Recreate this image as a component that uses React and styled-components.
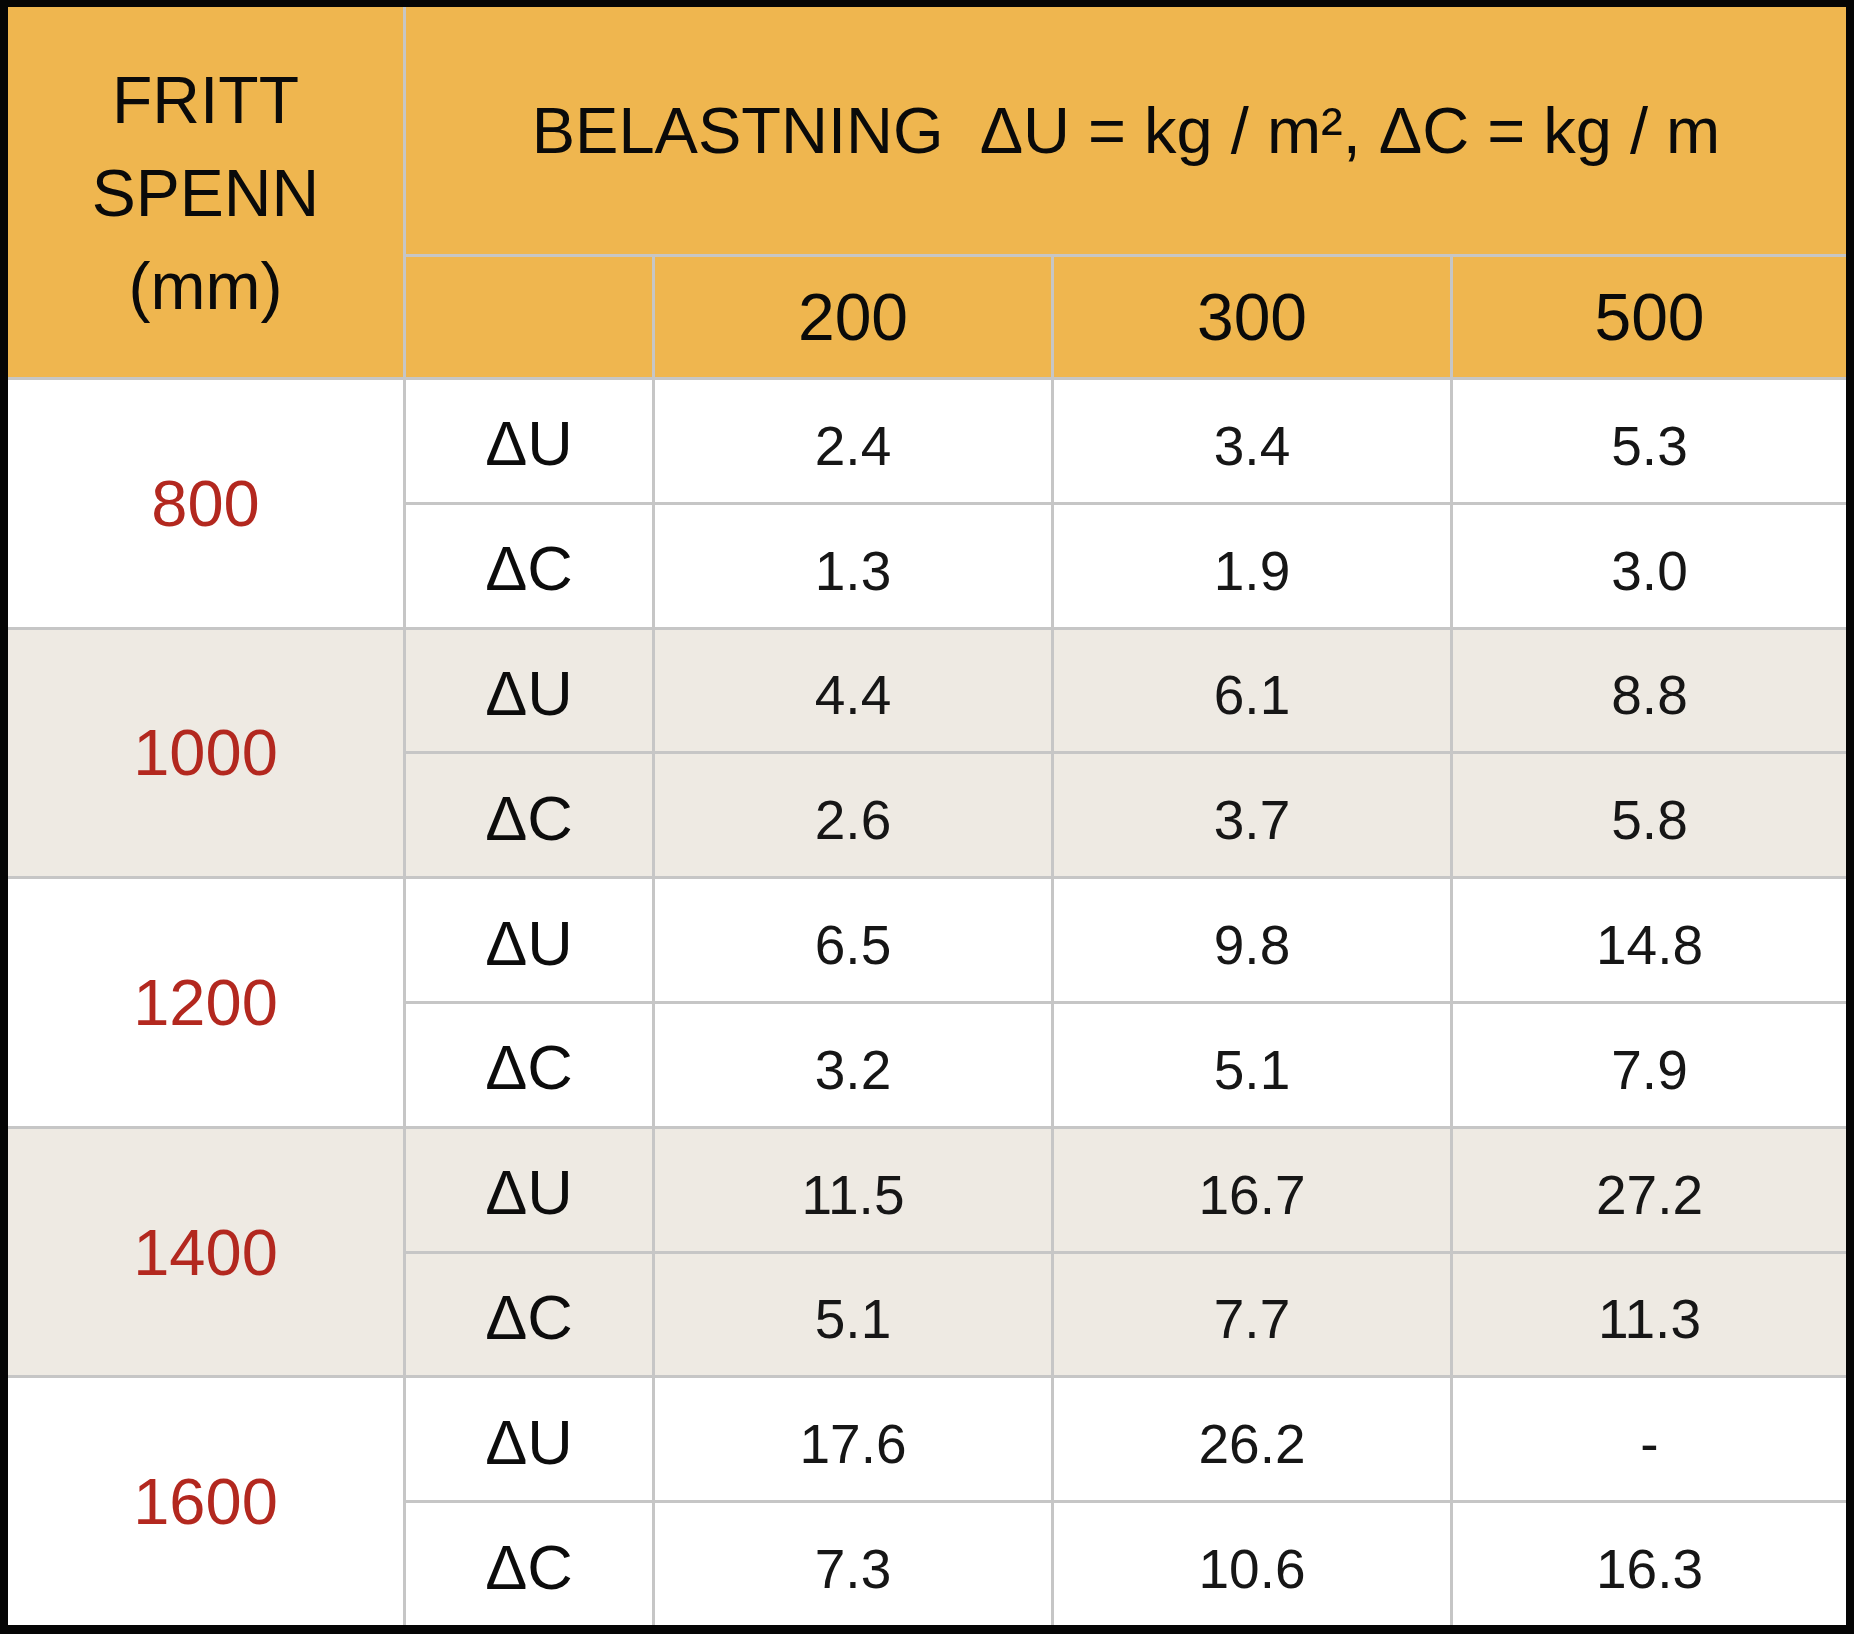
import React from "react";
import styled, { createGlobalStyle } from "styled-components";

const Global = createGlobalStyle`
  html, body { margin: 0; padding: 0; background: #ffffff; }
  body { font-family: "Liberation Sans", Arial, sans-serif; }
`;

const Frame = styled.div`
  box-sizing: border-box;
  width: 1854px;
  height: 1634px;
  border-style: solid;
  border-color: #050505;
  border-width: 7px 8px 9px 8px;
  background: #c6c6c6;
`;

const Grid = styled.div`
  display: grid;
  height: 100%;
  grid-template-columns: 395px 246px 396px 396px 393px;
  grid-template-rows: 247px 120px repeat(10, 1fr);
  gap: 3px;
  background: #c6c6c6;
  font-family: "Liberation Sans", Arial, sans-serif;
`;

const Cell = styled.div`
  display: flex;
  align-items: center;
  justify-content: center;
  text-align: center;
  box-sizing: border-box;
  background: ${(p) => (p.$shade ? "#eeeae3" : "#ffffff")};
  color: #161616;
  line-height: 1;
`;

const HeadCell = styled(Cell)`
  background: #efb64f;
  color: #0a0a0a;
  font-size: 66px;
  white-space: pre;
`;

const SpanHead = styled(HeadCell)`
  grid-row: span 2;
  flex-direction: column;
  line-height: 93px;
  padding-top: 2px;
`;

const TitleCell = styled(HeadCell)`
  grid-column: span 4;
  font-size: 65px;
`;

const GroupCell = styled(Cell)`
  grid-row: span 2;
  color: #b3281f;
  font-size: 65px;
`;

const KindCell = styled(Cell)`
  font-size: 63px;
  color: #0c0c0c;
  padding-top: 6px;
`;

const ValueCell = styled(Cell)`
  font-size: 55px;
  padding-top: 11px;
`;

const loads = [200, 300, 500];

const groups = [
  { span: "800", u: ["2.4", "3.4", "5.3"], c: ["1.3", "1.9", "3.0"] },
  { span: "1000", u: ["4.4", "6.1", "8.8"], c: ["2.6", "3.7", "5.8"] },
  { span: "1200", u: ["6.5", "9.8", "14.8"], c: ["3.2", "5.1", "7.9"] },
  { span: "1400", u: ["11.5", "16.7", "27.2"], c: ["5.1", "7.7", "11.3"] },
  { span: "1600", u: ["17.6", "26.2", "-"], c: ["7.3", "10.6", "16.3"] },
];

export default function App() {
  return (
    <>
      <Global />
      <Frame>
        <Grid>
          <SpanHead>
            <span>FRITT</span>
            <span>SPENN</span>
            <span>(mm)</span>
          </SpanHead>
          <TitleCell>{"BELASTNING  ΔU = kg / m², ΔC = kg / m"}</TitleCell>
          <HeadCell />
          {loads.map((l) => (
            <HeadCell key={l}>{l}</HeadCell>
          ))}
          {groups.map((g, i) => {
            const shade = i % 2 === 1;
            return (
              <React.Fragment key={g.span}>
                <GroupCell $shade={shade}>{g.span}</GroupCell>
                <KindCell $shade={shade}>ΔU</KindCell>
                {g.u.map((v, j) => (
                  <ValueCell key={"u" + j} $shade={shade}>
                    {v}
                  </ValueCell>
                ))}
                <KindCell $shade={shade}>ΔC</KindCell>
                {g.c.map((v, j) => (
                  <ValueCell key={"c" + j} $shade={shade}>
                    {v}
                  </ValueCell>
                ))}
              </React.Fragment>
            );
          })}
        </Grid>
      </Frame>
    </>
  );
}
